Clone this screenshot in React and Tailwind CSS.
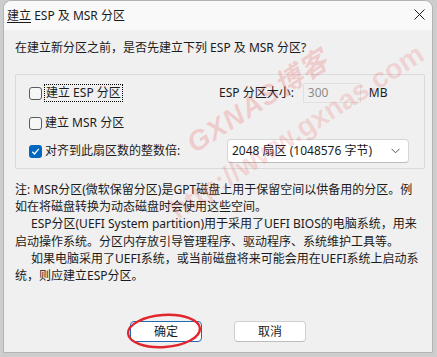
const Check = ({ checked }) =>
  checked ? (
    <span className="w-[13px] h-[13px] rounded-[3px] bg-[#0067c0] flex items-center justify-center shrink-0">
      <svg width="9" height="9" viewBox="0 0 9 9">
        <path d="M1.3 4.8 L3.5 7 L7.8 1.9" fill="none" stroke="#fff" strokeWidth="1.3" />
      </svg>
    </span>
  ) : (
    <span className="w-[13px] h-[13px] rounded-[3px] border border-[#5a5a5a] bg-[#f6f6f6] shrink-0" />
  );

export default function App() {
  return (
    <div className="w-[437px] h-[357px] bg-[#cdcdcd] relative overflow-hidden font-['Noto_Sans','Noto_Sans_CJK_SC',sans-serif] text-[12px] text-[#1b1b1b]">
      <div className="ml-[3px] w-[430px] h-[353px] rounded-t-[8px] border border-[#b4b4b4] bg-[#f0f0f0] flex flex-col">
        {/* Title bar */}
        <div className="h-[29px] bg-[#f9f9f9] rounded-t-[8px] flex items-center justify-between pl-[3px] pr-[7px]">
          <span className="leading-[16px]">
            <span className="underline underline-offset-[2px]">建立</span> ESP 及 MSR 分区
          </span>
          <svg width="11" height="11" viewBox="0 0 11 11" className="mb-[2px]">
            <path d="M0.5 0.5 L10.5 10.5 M10.5 0.5 L0.5 10.5" stroke="#1b1b1b" strokeWidth="1" />
          </svg>
        </div>

        <div className="pl-[11px] pr-[7px] flex flex-col">
          <div className="mt-[9px] leading-[17px] h-[17px]">在建立新分区之前，是否先建立下列 ESP 及 MSR 分区?</div>

          {/* Group box */}
          <div className="mt-[18px] h-[95px] border border-[#dadada] rounded-[2px] flex flex-col pt-[6px]">
            <div className="h-[24px] flex items-center">
              <div className="w-[203px] pl-[13px] flex items-center gap-[2px]">
                <Check />
                <span className="h-[18px] flex items-center px-[1px] border border-dotted border-black">建立 ESP 分区</span>
              </div>
              <span>ESP 分区大小:</span>
              <div className="ml-[9px] w-[58px] h-[20px] border border-[#e0e0e0] flex items-center pl-[4px] text-[#8c8c8c]">300</div>
              <span className="ml-[8px]">MB</span>
            </div>
            <div className="h-[24px] flex items-center mt-[6px]">
              <div className="pl-[13px] flex items-center gap-[3px]">
                <Check />
                <span>建立 MSR 分区</span>
              </div>
            </div>
            <div className="h-[24px] flex items-center mt-[4px]">
              <div className="w-[211px] pl-[13px] flex items-center gap-[3px]">
                <Check checked />
                <span>对齐到此扇区数的整数倍:</span>
              </div>
              <div className="w-[182px] h-[24px] bg-white border border-[#d6d6d6] border-b-[#bcbcbc] rounded-[4px] flex items-center justify-between pl-[4px] pr-[8px]">
                <span>2048 扇区 (1048576 字节)</span>
                <svg width="9" height="6" viewBox="0 0 9 6">
                  <path d="M0.5 0.8 L4.5 4.8 L8.5 0.8" fill="none" stroke="#555" strokeWidth="1" />
                </svg>
              </div>
            </div>
          </div>

          {/* Note */}
          <div className="mt-[12px] leading-[17.2px] whitespace-nowrap">
            <div>注: MSR分区(微软保留分区)是GPT磁盘上用于保留空间以供备用的分区。例</div>
            <div>如在将磁盘转换为动态磁盘时会使用这些空间。</div>
            <div className="pl-[16px]">ESP分区(UEFI System partition)用于采用了UEFI BIOS的电脑系统，用来</div>
            <div>启动操作系统。分区内存放引导管理程序、驱动程序、系统维护工具等。</div>
            <div className="pl-[16px]">如果电脑采用了UEFI系统，或当前磁盘将来可能会用在UEFI系统上启动系</div>
            <div>统，则应建立ESP分区。</div>
          </div>
        </div>

        {/* Buttons */}
        <div className="mt-auto mb-[10px] flex justify-center gap-[32px]">
          <button className="w-[72px] h-[21px] bg-white border border-[#1f6cb5] rounded-[4px] flex items-center justify-center leading-none">确定</button>
          <button className="w-[72px] h-[21px] bg-white border border-[#d0d0d0] border-b-[#bdbdbd] rounded-[4px] flex items-center justify-center leading-none">取消</button>
        </div>
      </div>

      {/* Watermark */}
      <span className="absolute left-[258px] top-[102px] -translate-x-1/2 -translate-y-1/2 -rotate-[33deg] whitespace-nowrap tracking-[1px] font-['Liberation_Sans','Noto_Sans_CJK_SC',sans-serif] font-bold italic text-[28px] text-[rgba(235,50,50,0.2)] pointer-events-none">
        GXNAS博客
      </span>
      <span className="absolute left-[297px] top-[132px] -translate-x-1/2 -translate-y-1/2 -rotate-[33deg] whitespace-nowrap font-['Liberation_Sans',sans-serif] font-bold text-[28px] text-[rgba(235,50,50,0.16)] pointer-events-none">
        http://www.gxnas.com
      </span>

      {/* Red annotation ellipse */}
      <svg className="absolute left-[120px] top-[308px] pointer-events-none" width="90" height="46" viewBox="0 0 90 46">
        <ellipse cx="44" cy="23" rx="36" ry="16" transform="rotate(-4 44 23)" fill="none" stroke="#e3262c" strokeWidth="2.4" />
      </svg>
    </div>
  );
}
